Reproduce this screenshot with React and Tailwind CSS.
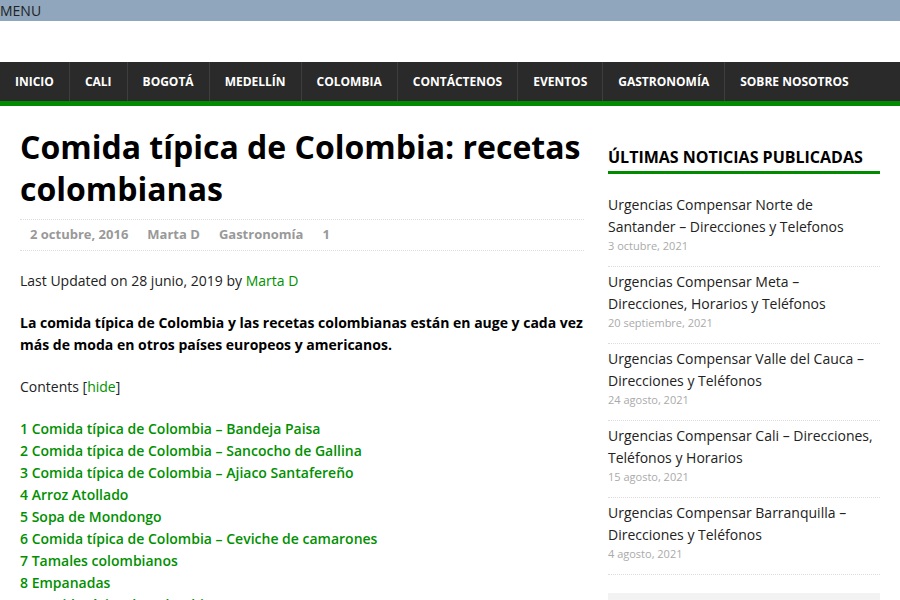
import React from 'react';

const navItems = [
  'Inicio',
  'Cali',
  'Bogotá',
  'Medellín',
  'Colombia',
  'Contáctenos',
  'Eventos',
  'Gastronomía',
  'Sobre nosotros',
];

const toc = [
  '1 Comida típica de Colombia – Bandeja Paisa',
  '2 Comida típica de Colombia – Sancocho de Gallina',
  '3 Comida típica de Colombia – Ajiaco Santafereño',
  '4 Arroz Atollado',
  '5 Sopa de Mondongo',
  '6 Comida típica de Colombia – Ceviche de camarones',
  '7 Tamales colombianos',
  '8 Empanadas',
  '9 Comida típica de Colombia – Arepas',
];

const news = [
  { title: 'Urgencias Compensar Norte de Santander – Direcciones y Telefonos', date: '3 octubre, 2021' },
  { title: 'Urgencias Compensar Meta – Direcciones, Horarios y Teléfonos', date: '20 septiembre, 2021' },
  { title: 'Urgencias Compensar Valle del Cauca – Direcciones y Teléfonos', date: '24 agosto, 2021' },
  { title: 'Urgencias Compensar Cali – Direcciones, Teléfonos y Horarios', date: '15 agosto, 2021' },
  { title: 'Urgencias Compensar Barranquilla – Direcciones y Teléfonos', date: '4 agosto, 2021' },
];

export default function App() {
  return (
    <div className="w-[900px] h-[600px] overflow-hidden bg-white font-['Open_Sans',sans-serif] text-[#333]">
      {/* barra superior */}
      <div className="h-[21px] bg-[#8fa6bd] text-[14px] leading-[21px] text-[#222]">MENU</div>
      <div className="h-[41px]" />

      {/* navegación */}
      <nav className="bg-[#2a2a2a] border-b-[5px] border-[#008b00]">
        <ul className="flex h-[39px]">
          {navItems.map((item, i) => (
            <li
              key={item}
              className={
                'px-[15px] flex items-center text-[12px] font-bold uppercase text-white ' +
                (i < navItems.length - 1 ? 'border-r border-[#3e3e3e]' : '')
              }
            >
              {item}
            </li>
          ))}
        </ul>
      </nav>

      <div className="flex gap-[24px] px-[20px] pt-[20px]">
        {/* artículo */}
        <main className="w-[564px] shrink-0">
          <h1 className="text-[32px] leading-[42px] font-bold text-black">
            Comida típica de Colombia: recetas colombianas
          </h1>
          <div className="mt-[9px] border-y border-dotted border-[#ddd] h-[32px] flex items-center gap-[19px] pl-[10px] text-[13px] font-bold text-[#999]">
            <span>2 octubre, 2016</span>
            <span>Marta D</span>
            <span>Gastronomía</span>
            <span>1</span>
          </div>

          <p className="mt-[19px] text-[14px] leading-[22px] text-[#222]">
            Last Updated on 28 junio, 2019 by <span className="text-[#009000]">Marta D</span>
          </p>
          <p className="mt-[20px] text-[14px] leading-[22px] font-bold text-black">
            La comida típica de Colombia y las recetas colombianas están en auge y cada vez más de moda en otros países europeos y americanos.
          </p>
          <p className="mt-[20px] text-[14px] leading-[22px] text-[#222]">
            Contents [<span className="text-[#009000]">hide</span>]
          </p>
          <ul className="mt-[20px] text-[14px] leading-[22px] font-semibold text-[#009000]">
            {toc.map((t) => (
              <li key={t}>{t}</li>
            ))}
          </ul>
        </main>

        {/* barra lateral */}
        <aside className="w-[272px] shrink-0 pt-[19px]">
          <h3 className="text-[16px] leading-[24px] font-bold text-black uppercase pb-[2px] border-b-[3px] border-[#008b00]">
            Últimas noticias publicadas
          </h3>
          <ul className="mt-[20px]">
            {news.map((n) => (
              <li key={n.title} className="border-b border-dotted border-[#ddd] pb-[12px] mb-[4px]">
                <div className="text-[14px] leading-[22px] text-[#222]">{n.title}</div>
                <div className="text-[11px] leading-[16px] text-[#aaa]">{n.date}</div>
              </li>
            ))}
          </ul>
          <div className="mt-[18px] h-[40px] bg-[#f2f2f2]" />
        </aside>
      </div>
    </div>
  );
}
